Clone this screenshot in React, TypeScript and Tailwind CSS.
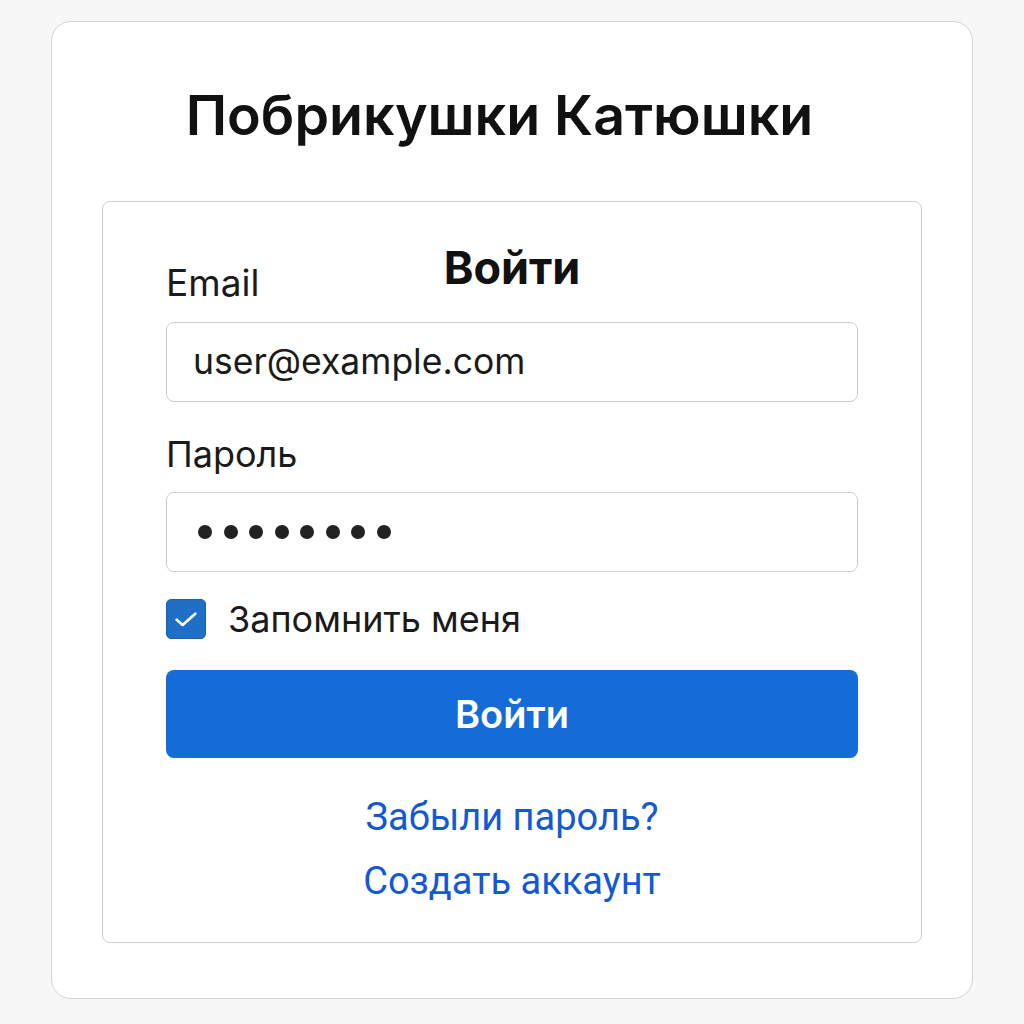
import React from "react";

export default function App() {
  return (
    <div className="min-h-[1024px] w-[1024px] bg-[#f7f7f7] pt-[21px] pl-[51px]" style={{ fontFamily: "Inter, 'Noto Sans', sans-serif" }}>
      <div className="w-[922px] h-[978px] bg-white border-[1.5px] border-[#d4d4d4] rounded-[20px] flex flex-col">
        <h1 className="h-[179px] pt-[58px] pr-[25px] text-center text-[55.5px] leading-[70px] font-semibold text-[#111]">
          Побрикушки Катюшки
        </h1>
        <div className="ml-[50px] w-[820px] h-[742px] border-[1.5px] border-[#cfcfcf] rounded-[8px] px-[63px] pt-[42px] flex flex-col">
          <div className="grid h-[78px]">
            <h2 className="col-start-1 row-start-1 self-start text-center text-[45px] leading-[48px] font-bold text-[#111]">Войти</h2>
            <label className="col-start-1 row-start-1 self-end pb-[19px] text-[37px] leading-[40px] text-[#1a1a1a]">Email</label>
          </div>
          <div className="h-[80px] border-[1.5px] border-[#cccccc] rounded-[8px] flex items-center pl-[26px] text-[35.5px] text-[#1a1a1a]">
            user@example.com
          </div>
          <label className="mt-[32px] h-[58px] text-[36px] leading-[40px] text-[#1a1a1a]">Пароль</label>
          <div className="h-[80px] border-[1.5px] border-[#cccccc] rounded-[8px] flex items-center pl-[31px] gap-[11.5px]">
            {Array.from({ length: 8 }).map((_, i) => (
              <span key={i} className="w-[14px] h-[14px] rounded-full bg-[#222]" />
            ))}
          </div>
          <div className="mt-[27px] flex items-center gap-[22px]">
            <span className="w-[40px] h-[40px] shrink-0 rounded-[5px] bg-[#1f6fc6] border border-[#1a5fae] flex items-center justify-center">
              <svg className="w-[32px] h-[32px]" viewBox="0 0 24 24" fill="none" stroke="white" strokeWidth="2" strokeLinecap="round" strokeLinejoin="round">
                <path d="M5 12.5l4.5 4L19 8" />
              </svg>
            </span>
            <span className="text-[36px] leading-[40px] text-[#1a1a1a]">Запомнить меня</span>
          </div>
          <button className="mt-[31px] h-[88px] rounded-[8px] bg-[#156bd8] text-white text-[38px] font-semibold">
            Войти
          </button>
          <a className="mt-[34px] text-center text-[38px] leading-[50px] text-[#1558d4]" style={{ fontFamily: "Roboto, Inter, sans-serif" }}>Забыли пароль?</a>
          <a className="mt-[14px] text-center text-[38px] leading-[50px] text-[#1558d4]" style={{ fontFamily: "Roboto, Inter, sans-serif" }}>Создать аккаунт</a>
        </div>
      </div>
    </div>
  );
}
